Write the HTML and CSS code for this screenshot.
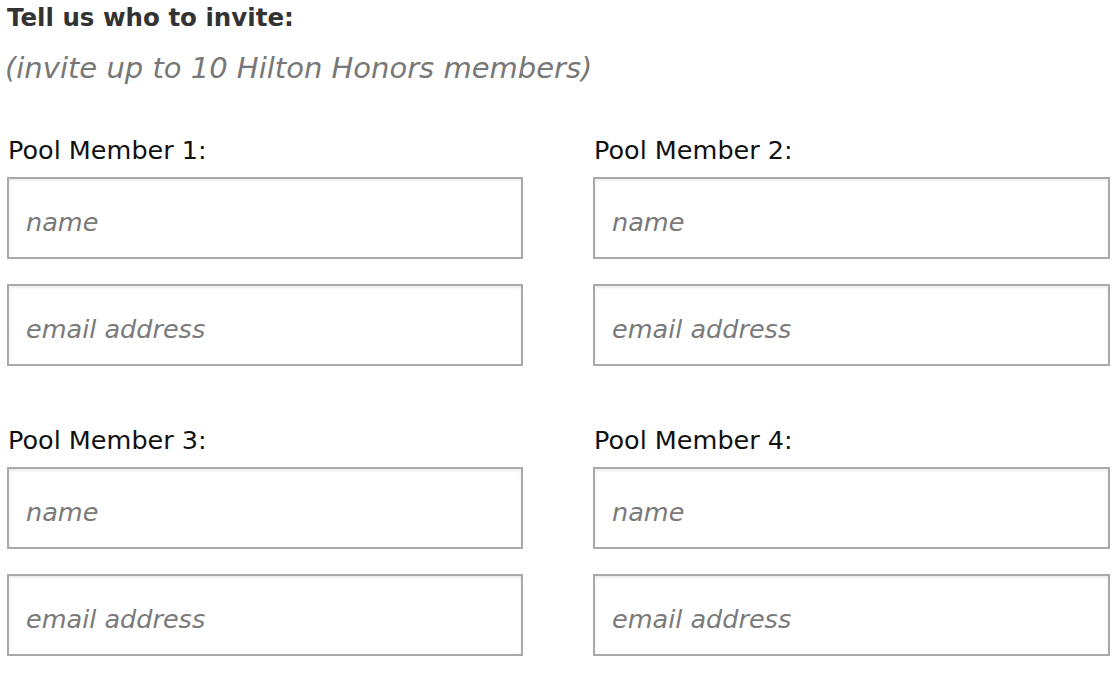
FILE: index.html
```html
<!DOCTYPE html>
<html lang="en">
<head>
<meta charset="utf-8">
<title>Invite Pool Members</title>
<link rel="stylesheet" href="styles.css">
</head>
<body>
<div class="page">
  <h1 class="title">Tell us who to invite:</h1>
  <p class="sub">(invite up to 10 Hilton Honors members)</p>
  <div class="grid">
    <div class="member">
      <label class="label">Pool Member 1:</label>
      <input class="field" type="text" placeholder="name">
      <input class="field" type="text" placeholder="email address">
    </div>
    <div class="member">
      <label class="label">Pool Member 2:</label>
      <input class="field" type="text" placeholder="name">
      <input class="field" type="text" placeholder="email address">
    </div>
    <div class="member">
      <label class="label">Pool Member 3:</label>
      <input class="field" type="text" placeholder="name">
      <input class="field" type="text" placeholder="email address">
    </div>
    <div class="member">
      <label class="label">Pool Member 4:</label>
      <input class="field" type="text" placeholder="name">
      <input class="field" type="text" placeholder="email address">
    </div>
  </div>
</div>
</body>
</html>
```

FILE: styles.css
```css
html, body {
  margin: 0;
  padding: 0;
  background: #ffffff;
}

.page {
  padding: 2px 10px 0 7px;
  font-family: "DejaVu Sans", "Open Sans", sans-serif;
}

.title {
  margin: 0;
  font-size: 24.5px;
  line-height: 32px;
  font-weight: bold;
  color: #333333;
}

.sub {
  margin: 15px 0 0 -2px;
  font-size: 29px;
  line-height: 38px;
  font-style: italic;
  color: #777777;
}

.grid {
  display: grid;
  grid-template-columns: 516px 517px;
  column-gap: 70px;
  row-gap: 57px;
  margin-top: 46px;
}

.member {
  display: flex;
  flex-direction: column;
}

.label {
  display: block;
  font-size: 25.5px;
  line-height: 34px;
  color: #111111;
  margin-bottom: 10px;
  padding-left: 1px;
}

.field {
  box-sizing: border-box;
  width: 100%;
  height: 82px;
  margin: 0 0 25px 0;
  padding: 7px 0 0 17px;
  border: 2px solid #a9a9a9;
  border-radius: 0;
  box-shadow: inset 0 2px 3px rgba(0, 0, 0, 0.08);
  background: #ffffff;
  font-family: "DejaVu Sans", "Open Sans", sans-serif;
  font-size: 25.5px;
  font-style: italic;
  color: #333333;
  outline: none;
}

.field:last-child {
  margin-bottom: 0;
}

.field::placeholder {
  color: #7a7a7a;
  opacity: 1;
}
```
